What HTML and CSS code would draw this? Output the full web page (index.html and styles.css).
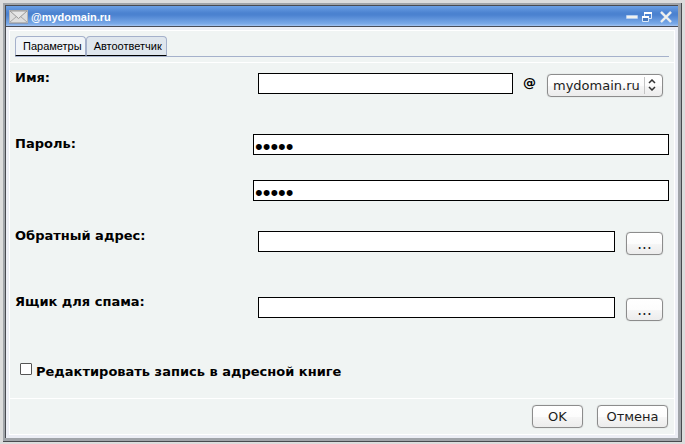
FILE: index.html
```html
<!DOCTYPE html>
<html lang="ru">
<head>
<meta charset="utf-8">
<title>@mydomain.ru</title>
<link rel="stylesheet" href="styles.css">
</head>
<body>
<div class="window">
  <div class="frame">
    <header class="titlebar">
      <svg class="mail" width="19" height="14" viewBox="0 0 19 14" aria-hidden="true">
        <rect x=".5" y=".5" width="18" height="12" fill="#dedede" stroke="#b5b5b5"/>
        <path d="M1 12 7.500 6.500M18 12l-6.500-5.500" fill="none" stroke="#a8a8a8"/>
        <path d="M1 1l8.500 7.500L18 1z" fill="#e6e6e6" stroke="#999"/>
        <path d="M0 13.500h19" stroke="#8799b8"/>
      </svg>
      <h1>@mydomain.ru</h1>
      <div class="controls">
        <button type="button" class="ctl" aria-label="Свернуть"><svg width="12" height="12" viewBox="0 0 12 12"><rect x="0" y="4" width="12" height="4" rx="1" fill="#b3cdf0"/><path d="M1 6h10" stroke="#f0f1ee" stroke-width="2"/></svg></button>
        <button type="button" class="ctl" aria-label="Восстановить"><svg width="12" height="12" viewBox="0 0 12 12"><path d="M3.500 6V2.500h7v5H8" fill="none" stroke="#dce8f8"/><path d="M3 2h8" stroke="#fff" stroke-width="2"/><path d="M1.500 6v4.500h6V6" fill="#4778bc" stroke="#dce8f8"/><path d="M1 6h7" stroke="#fff" stroke-width="2"/></svg></button>
        <button type="button" class="ctl close" aria-label="Закрыть"><svg width="12" height="12" viewBox="0 0 12 12"><path d="M1 1l10 10M11 1 1 11" stroke="#8db3e8" stroke-width="3"/><path d="M1 1l10 10M11 1 1 11" stroke="#f1f1ed" stroke-width="2"/></svg></button>
      </div>
    </header>
    <form class="panel">
      <nav class="tabs">
        <button type="button" class="tab active">Параметры</button>
        <button type="button" class="tab">Автоответчик</button>
      </nav>
      <div class="fields">
        <div class="row name">
          <label for="name">Имя:</label>
          <div class="control inset">
            <input class="text" id="name" type="text">
            <span class="at">@</span>
            <span class="picker">
              <select aria-label="Домен"><option>mydomain.ru</option></select>
              <svg class="arrows" width="8" height="12" viewBox="0 0 8 12" aria-hidden="true"><path d="M1 4l3-3 3 3M1 8l3 3 3-3" fill="none" stroke="#333" stroke-width="1.500"/></svg>
            </span>
          </div>
        </div>
        <div class="row passwords">
          <label for="pass">Пароль:</label>
          <div class="control stack">
            <input class="text" id="pass" type="password" value="12345">
            <input class="text" type="password" value="12345" aria-label="Повтор пароля">
          </div>
        </div>
        <div class="row">
          <label for="reply">Обратный адрес:</label>
          <div class="control inset">
            <input class="text" id="reply" type="text">
            <button type="button" class="btn more">...</button>
          </div>
        </div>
        <div class="row">
          <label for="spam">Ящик для спама:</label>
          <div class="control inset">
            <input class="text" id="spam" type="text">
            <button type="button" class="btn more">...</button>
          </div>
        </div>
        <div class="check">
          <input id="book" type="checkbox">
          <label for="book">Редактировать запись в адресной книге</label>
        </div>
      </div>
      <footer class="actions">
        <button type="button" class="btn ok">OK</button>
        <button type="button" class="btn cancel">Отмена</button>
      </footer>
    </form>
  </div>
</div>
</body>
</html>
```
FILE: styles.css
```css
* { box-sizing: border-box; }
body {
  margin: 0;
  padding: 3px 3px 2px;
  background: #dcdcdc;
  color: #000;
  font: 13px/16px "DejaVu Sans", sans-serif;
}
.window {
  padding: 2px 3px 3px 2px;
  background: #a0a4a9;
  border-right: 1px solid #484a4e;
  border-bottom: 1px solid #484a4e;
}
.frame {
  padding-bottom: 3px;
  background: #eceef5;
  border-top: 1px solid #484a50;
  border-left: 1px solid #484a50;
}
.titlebar {
  display: flex;
  align-items: center;
  height: 21px;
  padding: 1px 6px 0 3px;
  background: linear-gradient(#6b9fe4, #4b82d0 35%, #4b82d0 45%, #7baae9 90%, #a5c4f0);
  border-bottom: 1px solid #484c58;
}
.mail { display: block; }
h1 {
  flex: 1;
  margin: 0 0 0 3px;
  color: #fff;
  font: bold 11px/16px "Liberation Sans", sans-serif;
}
.controls { display: flex; gap: 3px; }
.ctl {
  width: 12px;
  height: 12px;
  padding: 0;
  border: 0;
  background: none;
}
.close { margin-left: 4px; }
.ctl svg { display: block; }
.panel {
  margin: 3px 3px 0;
  border: 1px solid #fff;
  background: #f0f4f3;
}
.tabs {
  display: flex;
  margin: 5px 5px;
  border-bottom: 1px solid #a5b1cb;
}
.tab {
  height: 20px;
  padding: 0 4px 0 7px;
  border: 1px solid #a5b1cb;
  border-bottom-color: #000;
  border-radius: 4px 4px 0 0;
  background: #dfe6ed;
  color: #000;
  font: 11px/18px "Liberation Sans", sans-serif;
}
.tab.active { padding-right: 3px; background: #f0f4f8; }
.fields {
  padding: 6px 5px 0;
  border-top: 1px solid #fff;
}
.row {
  display: grid;
  grid-template-columns: 238px 1fr;
  min-height: 66px;
}
.name { min-height: 61px; }
.passwords { min-height: 97px; }
.row label, .check label, .at { font-weight: bold; }
.row > label { padding-top: 1px; }
.passwords > label { padding-top: 6px; }
.control { padding-top: 4px; }
.inset {
  display: flex;
  align-items: flex-start;
  padding: 4px 6px 0 5px;
}
.stack {
  display: flex;
  flex-direction: column;
  gap: 25px;
}
.text {
  flex: 1;
  width: 100%;
  min-width: 0;
  height: 21px;
  padding: 1px 2px;
  border: 1px solid #000;
  border-radius: 0;
  background: #fff;
  font: 13px "DejaVu Sans", sans-serif;
}
.stack .text {
  flex: none;
  padding: 4px 1px 0;
  font: 22px/16px "Liberation Sans", sans-serif;
}
.at { margin: 2px 11px 0 10px; }
.picker {
  position: relative;
  width: 116px;
  margin-top: 1px;
}
.picker select, .btn {
  display: block;
  height: 23px;
  border: 1px solid #8c8c8c;
  border-radius: 4px;
  background: linear-gradient(#fff 0%, #fcfcfc 50%, #f5f5f5 55%, #ececec);
  box-shadow: 0 0 1px #aaa;
  color: #1c1c1c;
  font: 13px "DejaVu Sans", sans-serif;
}
.picker select {
  appearance: none;
  width: 100%;
  padding: 0 18px 0 5px;
}
.arrows {
  position: absolute;
  top: 5px;
  right: 7px;
}
.picker::after {
  content: "";
  position: absolute;
  top: 3px;
  right: 18px;
  width: 1px;
  height: 17px;
  background: #c4c4c4;
}
.btn { padding: 0; }
.more {
  width: 37px;
  margin: 1px 0 0 11px;
  font-size: 15px;
}
.check {
  display: flex;
  align-items: flex-start;
  height: 39px;
  padding: 4px 0 0 5px;
}
.check input {
  appearance: none;
  width: 12px;
  height: 12px;
  margin: 0 4px 0 0;
  border: 1px solid #555;
  border-radius: 1px;
  background: #fff;
}
.check input:checked { background: #4b82d0; }
.check label { padding-top: 1px; }
.actions {
  display: flex;
  justify-content: flex-end;
  gap: 14px;
  padding: 6px 6px;
  border-top: 1px solid #fff;
}
.ok { width: 51px; }
.cancel { width: 71px; }
```
